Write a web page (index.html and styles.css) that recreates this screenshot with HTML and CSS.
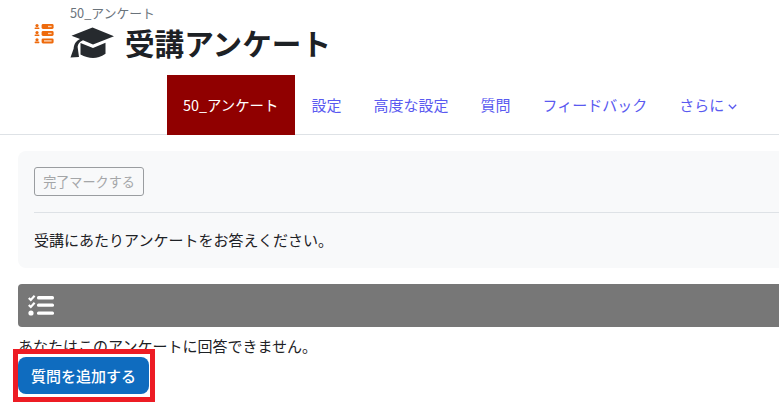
FILE: index.html
```html
<!DOCTYPE html>
<html lang="ja">
<head>
    <meta charset="UTF-8">
    <title>受講アンケート</title>
    <link rel="stylesheet" href="styles.css">
</head>
<body>

<header class="page-header">
    <svg class="activity-icon" viewBox="0 0 20 22" width="20" height="22">
        <g fill="#ee6a0c">
            <circle cx="3" cy="2.6" r="1.6"/><rect x="0.6" y="4.4" width="4.8" height="1.6" rx="0.6"/>
            <circle cx="3" cy="9.6" r="1.6"/><rect x="0.6" y="11.4" width="4.8" height="1.6" rx="0.6"/>
            <circle cx="3" cy="16.8" r="1.6"/><rect x="0.6" y="18.6" width="4.8" height="1.6" rx="0.6"/>
            <rect x="7.6" y="1" width="12" height="5" rx="1.4"/>
            <rect x="7.6" y="8" width="12" height="5" rx="1.4"/>
            <rect x="7.6" y="15.4" width="12" height="5" rx="1.4"/>
        </g>
        <g fill="#fbd3b4">
            <rect x="14" y="2.8" width="3.6" height="1.4"/>
            <rect x="14" y="9.8" width="3.6" height="1.4"/>
            <rect x="10" y="17.2" width="7.6" height="1.4"/>
        </g>
    </svg>
    <div class="header-text">
        <div class="breadcrumb">50_アンケート</div>
        <h1 class="page-title">
            <svg class="hat-icon" viewBox="0 0 44 32" width="44" height="31" preserveAspectRatio="none">
                <path fill="#262a2e" d="M22.5 0.5 L44 9.5 L23 18 L13 13.8 C9.5 15.2 8 17.5 7.6 20.5 L9 31 L0.5 31.5 L3.6 22.5 C4 17 6.5 14 10 12.3 L1.5 9 Z"/>
                <path fill="#262a2e" d="M10.5 16.5 L23 21.6 L35.5 16.3 L35.5 27.5 C31 30.6 27 32 23 32 C19 32 14.5 30.8 10.5 28.5 Z"/>
            </svg>
            <span>受講アンケート</span>
        </h1>
    </div>
</header>

<nav class="tabs">
    <a class="tab active" href="#">50_アンケート</a>
    <a class="tab" href="#">設定</a>
    <a class="tab" href="#">高度な設定</a>
    <a class="tab" href="#">質問</a>
    <a class="tab" href="#">フィードバック</a>
    <a class="tab" href="#">さらに
        <svg class="caret" viewBox="0 0 9 6" width="9" height="6"><path d="M0.8 0.8 L4.5 4.5 L8.2 0.8" fill="none" stroke="#5a5af0" stroke-width="1.3"/></svg>
    </a>
</nav>

<main class="content">
    <section class="intro-card">
        <button class="complete-btn" type="button">完了マークする</button>
        <hr class="divider">
        <p class="intro-text">受講にあたりアンケートをお答えください。</p>
    </section>

    <div class="section-bar">
        <svg viewBox="0 0 26 21" width="26" height="21">
            <path d="M0.8 3 L2.8 5 L6.6 0.8 M0.8 10 L2.8 12 L6.6 7.8" fill="none" stroke="#fff" stroke-width="2.2"/>
            <circle cx="3" cy="18" r="2.6" fill="#fff"/>
            <g fill="#fff">
                <rect x="9" y="1" width="17" height="3.4" rx="1.5"/>
                <rect x="9" y="8.4" width="17" height="3.4" rx="1.5"/>
                <rect x="9" y="16.4" width="17" height="3.4" rx="1.5"/>
            </g>
        </svg>
    </div>

    <p class="notice">あなたはこのアンケートに回答できません。</p>

    <div class="add-wrap">
        <button class="add-btn" type="button">質問を追加する</button>
        <div class="highlight"></div>
    </div>
</main>

</body>
</html>
```

FILE: styles.css
```css
body {
    margin: 0;
    width: 779px;
    height: 411px;
    overflow: hidden;
    background-color: #fff;
    color: #1d2125;
    font-family: "Noto Sans CJK JP", "Noto Sans", sans-serif;
    font-size: 15px;
}

/* Header */
.page-header {
    display: flex;
    height: 75px;
    padding-left: 34px;
    box-sizing: border-box;
}

.activity-icon {
    margin-top: 23px;
    margin-right: 16px;
}

.breadcrumb {
    margin-top: 4px;
    font-size: 12.8px;
    line-height: 17px;
    color: #6a737b;
}

.page-title {
    display: flex;
    align-items: center;
    gap: 11px;
    margin: 2px 0 0;
    font-size: 29.6px;
    font-weight: 700;
    line-height: 40px;
}

.hat-icon {
    margin-top: -2px;
}

/* Tabs */
.tabs {
    display: flex;
    align-items: center;
    height: 60px;
    padding-left: 167px;
    border-bottom: 1px solid #dee2e6;
    box-sizing: border-box;
}

.tab {
    padding: 0 16px;
    font-size: 15px;
    color: #5a5af0;
    text-decoration: none;
    white-space: nowrap;
}

.tab.active {
    display: flex;
    align-items: center;
    height: 60px;
    padding: 0 17px 0 16px;
    font-size: 14.4px;
    background-color: #900000;
    color: #fff;
}

.caret {
    vertical-align: 1px;
}

/* Content */
.content {
    width: 900px;
    padding: 16px 0 0 18px;
}

.intro-card {
    padding: 16px;
    height: 117px;
    box-sizing: border-box;
    background-color: #f8f9fa;
    border-radius: 8px;
}

.complete-btn {
    display: block;
    width: 110px;
    height: 29px;
    padding: 0;
    font-family: inherit;
    font-size: 13.1px;
    color: #a4a6a8;
    background: transparent;
    border: 1px solid #9a9da0;
    border-radius: 3px;
}

.divider {
    margin: 16px 0 0;
    border: 0;
    border-top: 1px solid #dee2e6;
}

.intro-text {
    margin: 16px 0 0;
    line-height: 21px;
}

.section-bar {
    display: flex;
    align-items: center;
    height: 43px;
    margin-top: 16px;
    padding-left: 10px;
    background-color: #777;
    border-radius: 4px;
}

.notice {
    margin: 8px 0 0;
    line-height: 21px;
}

.add-wrap {
    position: relative;
    margin-top: 1px;
}

.add-btn {
    display: block;
    width: 131px;
    height: 37px;
    padding: 0;
    font-family: inherit;
    font-size: 15px;
    font-weight: 500;
    color: #fff;
    background-color: #0f6cbf;
    border: 0;
    border-radius: 8px;
}

/* Red annotation drawn over the screenshot */
.highlight {
    position: absolute;
    left: -5px;
    top: -8px;
    width: 132px;
    height: 43px;
    border: 5px solid #ed1c24;
}
```
